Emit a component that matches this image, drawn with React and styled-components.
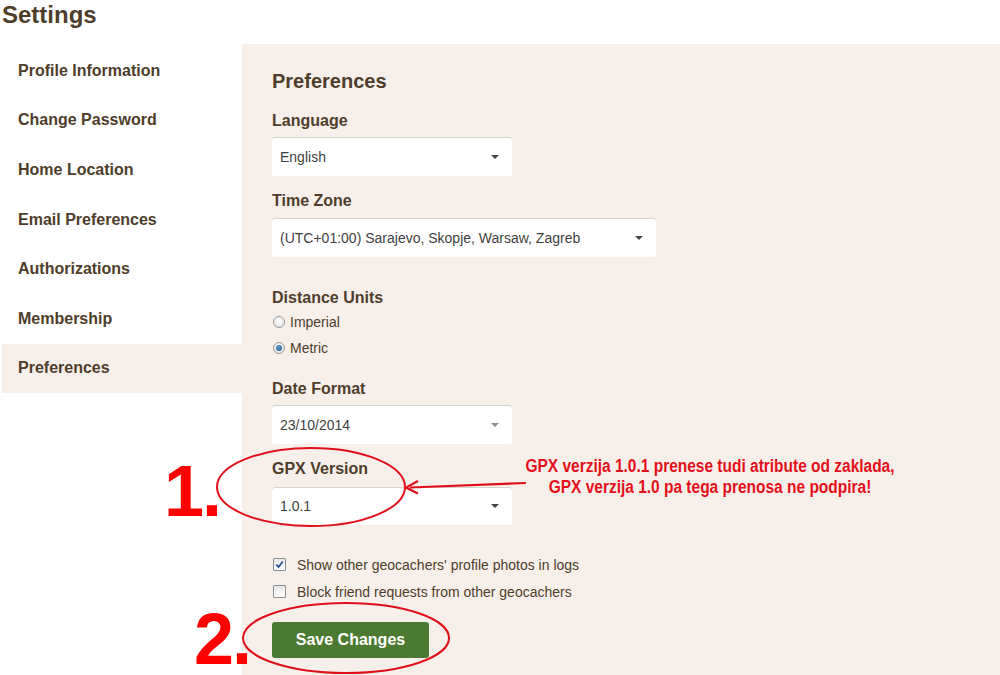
import React from "react";
import styled, { createGlobalStyle } from "styled-components";

const Global = createGlobalStyle`
  html, body { margin: 0; padding: 0; background: #fff; }
  body { font-family: "Liberation Sans", Arial, sans-serif; color: #4e3d2b; }
  * { box-sizing: border-box; }
`;

const Page = styled.div`
  position: relative;
  width: 1000px;
  height: 675px;
  overflow: hidden;
`;

const Title = styled.h1`
  margin: 0;
  height: 44px;
  padding: 1px 0 0 2px;
  font-size: 24px;
  line-height: 28px;
  font-weight: bold;
  color: #4e3d2b;
`;

const Body = styled.div`
  display: flex;
  height: 631px;
`;

const Sidebar = styled.nav`
  width: 242px;
  padding: 2px 0 0 2px;
  display: flex;
  flex-direction: column;
`;

const NavItem = styled.div`
  height: 49.6px;
  display: flex;
  align-items: center;
  padding-left: 16px;
  font-size: 16px;
  font-weight: bold;
  color: #4e3d2b;
  background: ${(p) => (p.$active ? "#f7f0ea" : "transparent")};
`;

const Panel = styled.section`
  flex: 1;
  background: #f7f0ea;
  padding: 25px 30px 0;
`;

const Heading = styled.h2`
  margin: 0;
  font-size: 20px;
  line-height: 24px;
  font-weight: bold;
  color: #4e3d2b;
`;

const Label = styled.div`
  margin-top: ${(p) => p.$mt}px;
  font-size: 16px;
  line-height: 20px;
  font-weight: bold;
  color: #4e3d2b;
`;

const Select = styled.div`
  margin-top: ${(p) => p.$mt || 7}px;
  width: ${(p) => p.$w}px;
  height: ${(p) => p.$h || 39}px;
  background: #fff;
  border-radius: 3px;
  box-shadow: inset 0 1px 0 #d6d2cc;
  display: flex;
  align-items: center;
  justify-content: space-between;
  padding: 0 13px 0 8px;
  font-size: 14px;
  color: #3f3f3f;
`;

const Caret = styled.span`
  width: 0;
  height: 0;
  border-left: 4.5px solid transparent;
  border-right: 4.5px solid transparent;
  border-top: 4.5px solid ${(p) => (p.$light ? "#8f8f8f" : "#444")};
`;

const OptionList = styled.div`
  margin-top: ${(p) => p.$mt}px;
  display: flex;
  flex-direction: column;
`;

const OptionRow = styled.div`
  height: ${(p) => p.$h}px;
  display: flex;
  align-items: center;
  font-size: 14px;
  color: #4e3d2b;
`;

const Radio = styled.span`
  width: 12px;
  height: 12px;
  margin: 0 5px 0 1px;
  border-radius: 50%;
  border: 1px solid #9a9a9a;
  background: radial-gradient(circle at 50% 40%, #ffffff 0%, #dcdcdc 100%);
  display: flex;
  align-items: center;
  justify-content: center;
  &::after {
    content: "";
    width: 6px;
    height: 6px;
    border-radius: 50%;
    background: ${(p) => (p.$checked ? "radial-gradient(circle at 40% 35%, #5fa0d0, #1c4f86)" : "transparent")};
  }
`;

const Check = styled.span`
  width: 13px;
  height: 13px;
  margin: 0 11px 0 1px;
  border: 1px solid #8e8f8f;
  border-radius: 1px;
  background: linear-gradient(#e8e8e8, #ffffff);
  display: flex;
  align-items: center;
  justify-content: center;
`;

const Button = styled.button`
  margin-top: 17px;
  width: 157px;
  height: 36px;
  border: none;
  border-radius: 3px;
  background: #4b7a32;
  color: #fff;
  font-family: "Liberation Sans", Arial, sans-serif;
  font-size: 16px;
  font-weight: bold;
  cursor: pointer;
`;

const Overlay = styled.svg`
  position: absolute;
  left: 0;
  top: 0;
  pointer-events: none;
`;

const BigNumber = styled.div`
  position: absolute;
  left: ${(p) => p.$x}px;
  top: ${(p) => p.$y}px;
  font-family: "Liberation Sans", Arial, sans-serif;
  font-size: 72px;
  line-height: 72px;
  font-weight: bold;
  color: #ff0000;
  letter-spacing: -2px;
`;

const Note = styled.div`
  position: absolute;
  left: 437px;
  top: 456px;
  width: 546px;
  text-align: center;
  font-family: "Liberation Sans", Arial, sans-serif;
  font-size: 18px;
  line-height: 21px;
  font-weight: bold;
  color: #e3101a;
  transform: scaleX(0.86);
  transform-origin: 50% 0;
`;

const CheckMark = () => (
  <svg width="9" height="9" viewBox="0 0 9 9">
    <path d="M1.2 4.6 L3.6 7 L7.8 1.5" fill="none" stroke="#2a4f8f" strokeWidth="1.8" />
  </svg>
);

const navItems = [
  "Profile Information",
  "Change Password",
  "Home Location",
  "Email Preferences",
  "Authorizations",
  "Membership",
  "Preferences",
];

export default function App() {
  return (
    <Page>
      <Global />
      <Title>Settings</Title>
      <Body>
        <Sidebar>
          {navItems.map((n) => (
            <NavItem key={n} $active={n === "Preferences"}>
              {n}
            </NavItem>
          ))}
        </Sidebar>
        <Panel>
          <Heading>Preferences</Heading>

          <Label $mt={18}>Language</Label>
          <Select $w={240} $mt={6}>
            English
            <Caret />
          </Select>

          <Label $mt={15}>Time Zone</Label>
          <Select $w={384} $mt={7}>
            (UTC+01:00) Sarajevo, Skopje, Warsaw, Zagreb
            <Caret />
          </Select>

          <Label $mt={31}>Distance Units</Label>
          <OptionList $mt={1}>
            <OptionRow $h={26}>
              <Radio />
              Imperial
            </OptionRow>
            <OptionRow $h={26}>
              <Radio $checked />
              Metric
            </OptionRow>
          </OptionList>

          <Label $mt={18}>Date Format</Label>
          <Select $w={240} $mt={6}>
            23/10/2014
            <Caret $light />
          </Select>

          <Label $mt={15}>GPX Version</Label>
          <Select $w={240} $mt={8} $h={38}>
            1.0.1
            <Caret />
          </Select>

          <OptionList $mt={26}>
            <OptionRow $h={27}>
              <Check>
                <CheckMark />
              </Check>
              Show other geocachers' profile photos in logs
            </OptionRow>
            <OptionRow $h={27}>
              <Check />
              Block friend requests from other geocachers
            </OptionRow>
          </OptionList>

          <Button>Save Changes</Button>
        </Panel>
      </Body>

      <Overlay width="1000" height="675" viewBox="0 0 1000 675">
        <ellipse cx="311" cy="487" rx="94" ry="39" fill="none" stroke="#e0101a" strokeWidth="2" />
        <ellipse cx="346" cy="638" rx="103" ry="35" fill="none" stroke="#e0101a" strokeWidth="2" />
        <line x1="526" y1="483" x2="410" y2="487.5" stroke="#e0101a" strokeWidth="2.2" />
        <path d="M418 481 L406 487.6 L418 493.5" fill="none" stroke="#e0101a" strokeWidth="2.2" />
      </Overlay>
      <BigNumber $x={164} $y={455}>1.</BigNumber>
      <BigNumber $x={194} $y={603}>2.</BigNumber>
      <Note>
        GPX verzija 1.0.1 prenese tudi atribute od zaklada,
        <br />
        GPX verzija 1.0 pa tega prenosa ne podpira!
      </Note>
    </Page>
  );
}
